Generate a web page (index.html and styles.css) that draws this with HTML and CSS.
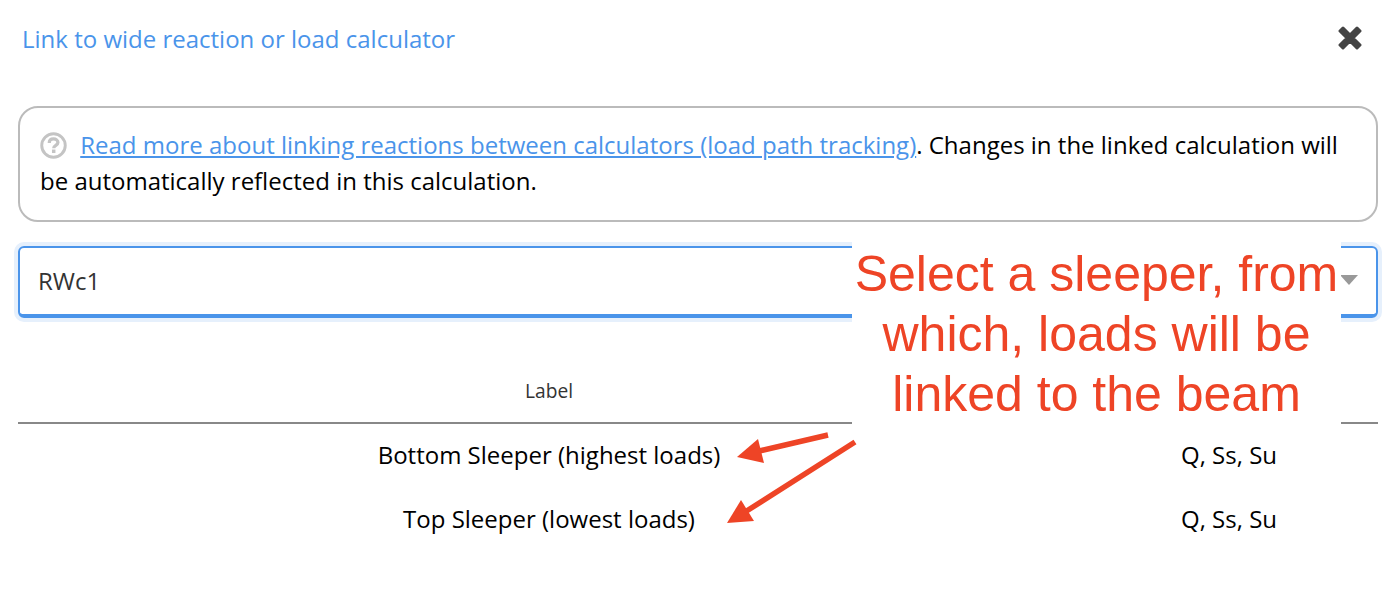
FILE: index.html
```html
<!DOCTYPE html>
<html lang="en">
<head>
    <meta charset="UTF-8">
    <title>Link to wide reaction or load calculator</title>
    <link rel="stylesheet" href="styles.css">
</head>
<body>
    <div class="modal">
        <div class="modal-header">
            <h2 class="modal-title">Link to wide reaction or load calculator</h2>
            <svg class="close-icon" width="24" height="24" viewBox="0 0 24 24">
                <polygon points="5,2 12,9 19,2 22,5 15,12 22,19 19,22 12,15 5,22 2,19 9,12 2,5" fill="#444" stroke="#444" stroke-width="3" stroke-linejoin="round"/>
            </svg>
        </div>

        <div class="info-box">
            <svg class="help-icon" width="27" height="27" viewBox="0 0 28 28">
                <circle cx="14" cy="14" r="12.2" stroke="#c4c4c4" stroke-width="3" fill="none"/>
                <path d="M9.6 11.4 C9.6 8.6 11.6 7.2 14 7.2 C16.6 7.2 18.6 8.8 18.6 11 C18.6 13.8 14.2 13.8 14.2 16.8" stroke="#c4c4c4" stroke-width="3.4" fill="none"/>
                <rect x="12.4" y="18.2" width="3.6" height="3.6" fill="#c4c4c4"/>
            </svg>
            <a href="#" class="info-link">Read more about linking reactions between calculators (load path tracking)</a>. Changes in the linked calculation will be automatically reflected in this calculation.
        </div>

        <div class="select-box">
            <span class="select-value">RWc1</span>
            <span class="select-caret"></span>
        </div>

        <table class="loads-table">
            <thead>
                <tr>
                    <th>Label</th>
                    <th class="col-loads"></th>
                </tr>
            </thead>
            <tbody>
                <tr>
                    <td>Bottom Sleeper (highest loads)</td>
                    <td>Q, Ss, Su</td>
                </tr>
                <tr>
                    <td>Top Sleeper (lowest loads)</td>
                    <td>Q, Ss, Su</td>
                </tr>
            </tbody>
        </table>
    </div>

    <!-- annotation drawn on top of the screenshot -->
    <div class="note">Select a sleeper, from which, loads will be linked to the beam</div>
    <svg class="note-arrows" width="1396" height="594" viewBox="0 0 1396 594">
        <path d="M828 435 L755 452 M855 442 L745 512" stroke="#ee4426" stroke-width="5.5" fill="none"/>
        <polygon points="737,457 758,439 764,463" fill="#ee4426"/>
        <polygon points="727,523 741,500 754,521" fill="#ee4426"/>
    </svg>
</body>
</html>
```

FILE: styles.css
```css
html, body {
    margin: 0;
    height: 594px;
    overflow: hidden;
    background-color: #fff;
}

body {
    font-family: "Open Sans", sans-serif;
    color: #000;
}

.modal {
    padding: 0 18px;
}

.modal-header {
    display: flex;
    justify-content: space-between;
    align-items: center;
    height: 76px;
    padding: 0 0 0 4px;
    margin-bottom: 30px;
}

.modal-title {
    margin: 0;
    font-size: 24px;
    font-weight: 400;
    color: #4a94ea;
}

.close-icon {
    margin-right: 16px;
}

.info-box {
    padding: 19px 20px 19px 20px;
    box-sizing: border-box;
    height: 116px;
    border: 2px solid #bbb;
    border-radius: 20px;
    font-size: 24px;
    line-height: 36px;
}

.help-icon {
    vertical-align: -5px;
    margin-right: 7px;
}

.info-link {
    color: #4a94ea;
}

.select-box {
    display: flex;
    justify-content: space-between;
    align-items: center;
    box-sizing: border-box;
    height: 72px;
    margin-top: 24px;
    padding: 0 18px 2px 18px;
    border: 2px solid #4a94ea;
    border-bottom-width: 4px;
    border-radius: 6px;
    box-shadow: 0 0 0 4px #e6f0fc;
}

.select-value {
    font-size: 24px;
    color: #333;
}

.select-caret {
    width: 0;
    height: 0;
    border-left: 9px solid transparent;
    border-right: 9px solid transparent;
    border-top: 10px solid #999;
}

.loads-table {
    width: 100%;
    margin-top: 41px;
    border-collapse: collapse;
    table-layout: fixed;
}

.loads-table th {
    height: 63px;
    padding: 0;
    font-size: 19.2px;
    font-weight: 400;
    color: #333;
    border-bottom: 2px solid #888;
}

.col-loads {
    width: 298px;
}

.loads-table td {
    height: 60px;
    padding: 0 0 4px;
    font-size: 24px;
    text-align: center;
}

.note {
    position: absolute;
    left: 852px;
    top: 240px;
    width: 489px;
    height: 185px;
    padding-top: 4px;
    box-sizing: border-box;
    background-color: #fff;
    font-family: "Liberation Sans", Arial, sans-serif;
    font-size: 50px;
    line-height: 60px;
    color: #ee4426;
    text-align: center;
}

.note-arrows {
    position: absolute;
    left: 0;
    top: 0;
}
```
